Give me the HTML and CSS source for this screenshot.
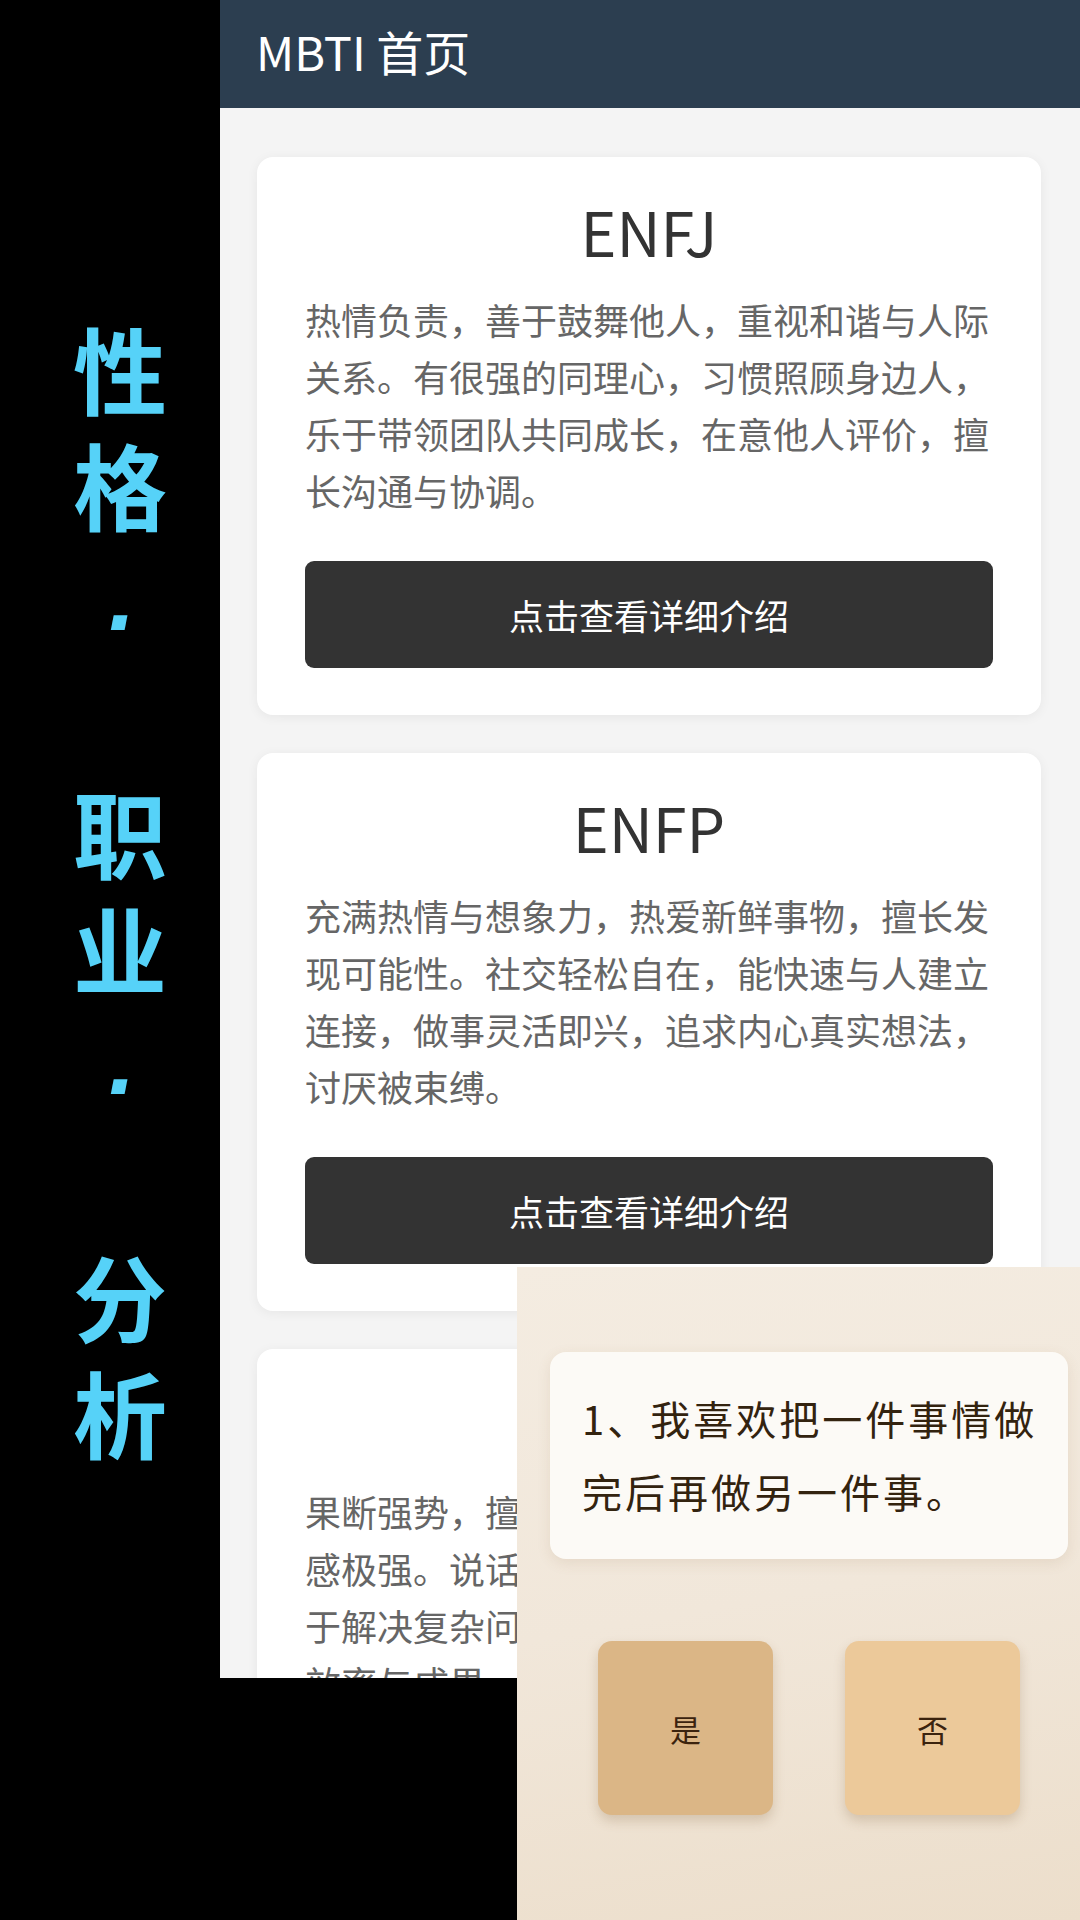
FILE: index.html
```html
<!DOCTYPE html>
<html lang="zh-CN">
<head>
<meta charset="utf-8">
<title>MBTI 首页</title>
<link rel="stylesheet" href="styles.css">
</head>
<body>
<div class="stage">
  <aside class="side">
    <div class="side-row">性</div>
    <div class="side-row">格</div>
    <div class="side-row dot-row"><span class="sep">.</span></div>
    <div class="side-row"></div>
    <div class="side-row">职</div>
    <div class="side-row">业</div>
    <div class="side-row dot-row"><span class="sep">.</span></div>
    <div class="side-row"></div>
    <div class="side-row">分</div>
    <div class="side-row">析</div>
  </aside>

  <main class="screen">
    <header class="topbar">MBTI 首页</header>
    <section class="list">
      <article class="card">
        <h2 class="card-title">ENFJ</h2>
        <p class="card-desc">热情负责，善于鼓舞他人，重视和谐与人际关系。有很强的同理心，习惯照顾身边人，乐于带领团队共同成长，在意他人评价，擅长沟通与协调。</p>
        <button class="card-btn">点击查看详细介绍</button>
      </article>
      <article class="card">
        <h2 class="card-title">ENFP</h2>
        <p class="card-desc">充满热情与想象力，热爱新鲜事物，擅长发现可能性。社交轻松自在，能快速与人建立连接，做事灵活即兴，追求内心真实想法，讨厌被束缚。</p>
        <button class="card-btn">点击查看详细介绍</button>
      </article>
      <article class="card">
        <h2 class="card-title">ENTJ</h2>
        <p class="card-desc">果断强势，擅长领导与规划，目标感与责任感极强。说话直接有力，逻辑清晰严谨，善于解决复杂问题，注重计划与执行力，追求效率与成果。</p>
        <button class="card-btn">点击查看详细介绍</button>
      </article>
    </section>
  </main>

  <div class="quiz">
    <div class="quiz-inner">
      <div class="question">1、我喜欢把一件事情做完后再做另一件事。</div>
      <div class="answers">
        <button class="answer yes">是</button>
        <button class="answer no">否</button>
      </div>
    </div>
  </div>
</div>
</body>
</html>
```

FILE: styles.css
```css
* { box-sizing: border-box; }

html, body {
  margin: 0;
  padding: 0;
  background: #000;
}

body {
  width: 1080px;
  height: 1920px;
  overflow: hidden;
  font-family: "Noto Sans CJK SC", "Noto Sans", sans-serif;
}

.stage {
  position: relative;
  width: 1080px;
  height: 1920px;
  display: flex;
  align-items: flex-start;
}

/* left vertical title */
.side {
  width: 220px;
  flex: none;
  padding-top: 309px;
  padding-left: 20px;
  display: flex;
  flex-direction: column;
  color: #56d2f8;
  font-weight: 700;
  font-size: 94px;
}

.side-row {
  height: 116px;
  line-height: 116px;
  text-align: center;
}

.dot-row {
  display: flex;
  justify-content: center;
  align-items: flex-start;
  padding-top: 4px;
}

.sep {
  font-family: "DejaVu Sans", sans-serif;
  font-weight: 700;
  font-style: oblique;
  font-size: 78px;
  line-height: 116px;
  padding-left: 4px;
}

/* phone screen */
.screen {
  width: 860px;
  height: 1678px;
  flex: none;
  overflow: hidden;
  background: #f4f4f4;
}

.topbar {
  height: 108px;
  background: #2c3e50;
  color: #fff;
  font-size: 47px;
  line-height: 1;
  display: flex;
  align-items: center;
  padding-left: 36px;
  padding-bottom: 8px;
}

.list {
  display: flex;
  flex-direction: column;
  gap: 38px;
  padding: 49px 39px 0 37px;
}

.card {
  background: #fff;
  border-radius: 16px;
  box-shadow: 0 2px 12px rgba(0, 0, 0, 0.06);
  padding: 48px 48px 47px;
  display: flex;
  flex-direction: column;
}

.card-title {
  margin: 0 0 30px;
  font-size: 61px;
  line-height: 52px;
  padding-bottom: 4px;
  font-weight: 400;
  color: #333;
  text-align: center;
}

.card-desc {
  margin: 0 0 42px;
  font-size: 36px;
  line-height: 57px;
  color: #666;
}

.card-btn {
  height: 107px;
  border: none;
  border-radius: 9px;
  background: #333;
  color: #fff;
  font-family: inherit;
  font-size: 35px;
  padding: 0;
}

/* quiz overlay */
.quiz {
  position: absolute;
  left: 517px;
  top: 1267px;
  width: 563px;
  height: 653px;
  background: linear-gradient(170deg, #f4ece1 0%, #f1e7da 50%, #ecdecb 100%);
  padding: 85px 12px 0 33px;
}

.quiz-inner {
  display: flex;
  flex-direction: column;
  gap: 82px;
}

.question {
  background: #fcfaf6;
  border-radius: 16px;
  box-shadow: 0 4px 14px rgba(140, 100, 60, 0.12);
  padding: 30px 16px 31px 32px;
  font-size: 40px;
  line-height: 73px;
  letter-spacing: 3px;
  color: #33230f;
}

.answers {
  display: flex;
  justify-content: center;
  gap: 72px;
}

.answer {
  width: 175px;
  height: 174px;
  border: none;
  border-radius: 14px;
  font-family: inherit;
  font-size: 31px;
  color: #3b230e;
  box-shadow: 0 6px 12px rgba(120, 80, 40, 0.22);
  padding: 0;
}

.yes { background: #dbb686; }
.no { background: #ecc99a; }
```
